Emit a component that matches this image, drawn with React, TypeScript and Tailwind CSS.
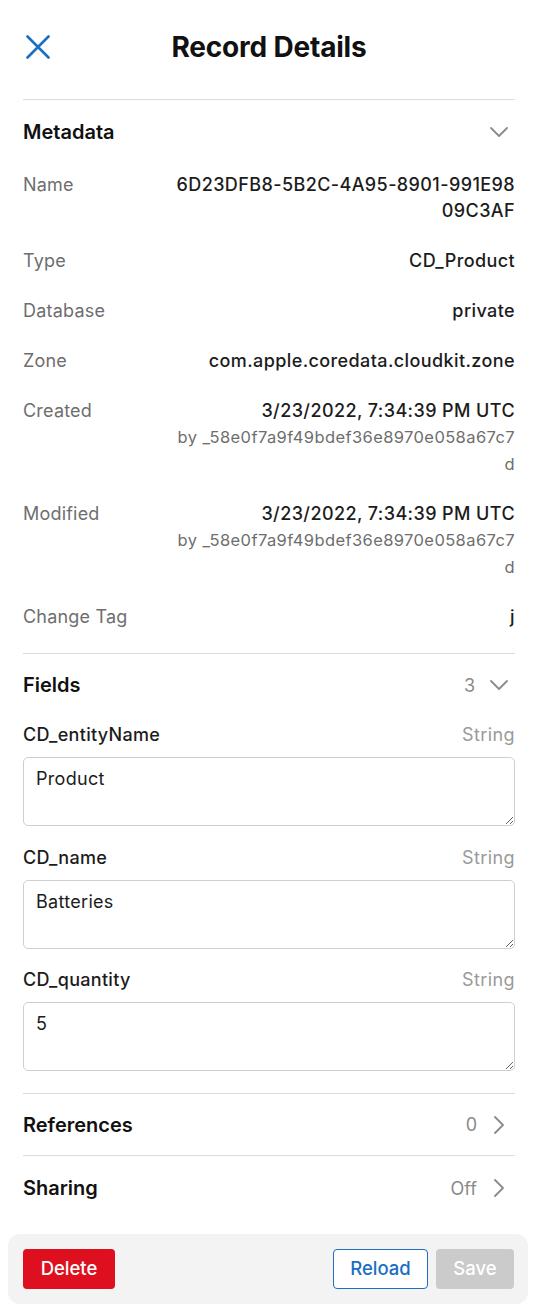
import React from "react";

const font = { fontFamily: "Inter, 'Noto Sans', 'Liberation Sans', sans-serif" };

function ChevronDown() {
  return (
    <svg width="20" height="12" viewBox="0 0 20 12" fill="none">
      <polyline points="2,2 10,10 18,2" stroke="#8a8a8a" strokeWidth="1.8" strokeLinecap="round" strokeLinejoin="round" />
    </svg>
  );
}

function ChevronRight() {
  return (
    <svg width="12" height="20" viewBox="0 0 12 20" fill="none">
      <polyline points="2,2 10,10 2,18" stroke="#8a8a8a" strokeWidth="1.8" strokeLinecap="round" strokeLinejoin="round" />
    </svg>
  );
}

function Row({ label, children }: { label: string; children: React.ReactNode }) {
  return (
    <div className="flex justify-between items-start py-3">
      <div className="text-[18px] leading-[26px] tracking-[0.2px] text-[#6e6e6e]">{label}</div>
      <div className="flex flex-col items-end text-right">{children}</div>
    </div>
  );
}

function V({ children }: { children: React.ReactNode }) {
  return <div className="text-[18px] leading-[26px] tracking-[0.4px] text-[#1c1c1c] font-medium whitespace-nowrap">{children}</div>;
}

function Sub({ children }: { children: React.ReactNode }) {
  return <div className="text-[16.5px] leading-[26.5px] tracking-[0.4px] text-[#6e6e6e] whitespace-nowrap">{children}</div>;
}

function Field({ label, value }: { label: string; value: string }) {
  return (
    <div className="flex flex-col gap-[9px]">
      <div className="flex justify-between items-center">
        <div className="text-[18px] leading-[26px] tracking-[0.3px] text-[#1c1c1c] font-medium">{label}</div>
        <div className="text-[18px] leading-[26px] tracking-[0.4px] text-[#9a9a9a]">String</div>
      </div>
      <textarea
        defaultValue={value}
        className="h-[69px] w-full rounded-[5px] border border-[#cfcfcf] px-[12px] pt-[8px] text-[18px] leading-[26px] tracking-[0.3px] text-[#1c1c1c] outline-none"
        style={font}
      />
    </div>
  );
}

export default function App() {
  return (
    <div className="min-h-[1316px] w-[541px] bg-white flex flex-col" style={font}>
      <div className="pl-[23px] pr-[26px] flex flex-col">
        {/* Header */}
        <div className="relative h-[100px] flex items-center justify-center border-b border-[#dcdcdc]">
          <div className="absolute left-[3px] top-[35px]">
            <svg width="24" height="24" viewBox="0 0 24 24" fill="none">
              <path d="M1.5 1.5 L22.5 22.5 M22.5 1.5 L1.5 22.5" stroke="#1b6ec2" strokeWidth="2.6" strokeLinecap="round" />
            </svg>
          </div>
          <div className="text-[28px] font-bold text-[#111] -mt-[6px] tracking-[-0.2px]">Record Details</div>
        </div>

        {/* Metadata */}
        <div className="flex flex-col pt-[14px] pb-[11px] border-b border-[#dcdcdc]">
          <div className="h-[36px] flex items-center justify-between mb-[10px]">
            <div className="text-[20px] font-semibold text-[#111]">Metadata</div>
            <div className="pr-[6px]"><ChevronDown /></div>
          </div>
          <Row label="Name">
            <V>6D23DFB8-5B2C-4A95-8901-991E98</V>
            <V>09C3AF</V>
          </Row>
          <Row label="Type">
            <V>CD_Product</V>
          </Row>
          <Row label="Database">
            <V>private</V>
          </Row>
          <Row label="Zone">
            <V>com.apple.coredata.cloudkit.zone</V>
          </Row>
          <Row label="Created">
            <V>3/23/2022, 7:34:39 PM UTC</V>
            <Sub>by _58e0f7a9f49bdef36e8970e058a67c7</Sub>
            <Sub>d</Sub>
          </Row>
          <Row label="Modified">
            <V>3/23/2022, 7:34:39 PM UTC</V>
            <Sub>by _58e0f7a9f49bdef36e8970e058a67c7</Sub>
            <Sub>d</Sub>
          </Row>
          <Row label="Change Tag">
            <V>j</V>
          </Row>
        </div>

        {/* Fields */}
        <div className="flex flex-col pt-[13px] pb-[22px] border-b border-[#dcdcdc]">
          <div className="h-[36px] flex items-center justify-between">
            <div className="text-[20px] font-semibold text-[#111]">Fields</div>
            <div className="flex items-center gap-[14px] pr-[6px]">
              <span className="text-[18px] text-[#8a8a8a]">3</span>
              <ChevronDown />
            </div>
          </div>
          <div className="flex flex-col gap-[18.5px] pt-[19px]">
            <Field label="CD_entityName" value="Product" />
            <Field label="CD_name" value="Batteries" />
            <Field label="CD_quantity" value="5" />
          </div>
        </div>

        {/* References */}
        <div className="h-[62px] flex items-center justify-between border-b border-[#dcdcdc]">
          <div className="text-[20px] font-semibold text-[#111]">References</div>
          <div className="flex items-center gap-[16px] pr-[10px]">
            <span className="text-[18px] text-[#8a8a8a]">0</span>
            <ChevronRight />
          </div>
        </div>

        {/* Sharing */}
        <div className="h-[64px] flex items-center justify-between">
          <div className="text-[20px] font-semibold text-[#111]">Sharing</div>
          <div className="flex items-center gap-[16px] pr-[10px]">
            <span className="text-[18px] text-[#8a8a8a]">Off</span>
            <ChevronRight />
          </div>
        </div>
      </div>

      {/* Footer */}
      <div className="ml-[8px] mt-[14px] mr-[13px] rounded-[12px] bg-[#f3f3f3] pl-[15px] pr-[14px] py-[15px] flex items-center justify-between">
        <button className="h-[40px] w-[92px] rounded-[4px] bg-[#de0f1e] text-white text-[18.5px] font-medium">Delete</button>
        <div className="flex items-center gap-[8px]">
          <button className="h-[40px] w-[95px] rounded-[4px] border border-[#1b6ec2] bg-white text-[#1b6ec2] text-[18.5px] font-medium">Reload</button>
          <button className="h-[40px] w-[78px] rounded-[4px] bg-[#cbcbcb] text-white text-[18.5px] font-medium">Save</button>
        </div>
      </div>
    </div>
  );
}
